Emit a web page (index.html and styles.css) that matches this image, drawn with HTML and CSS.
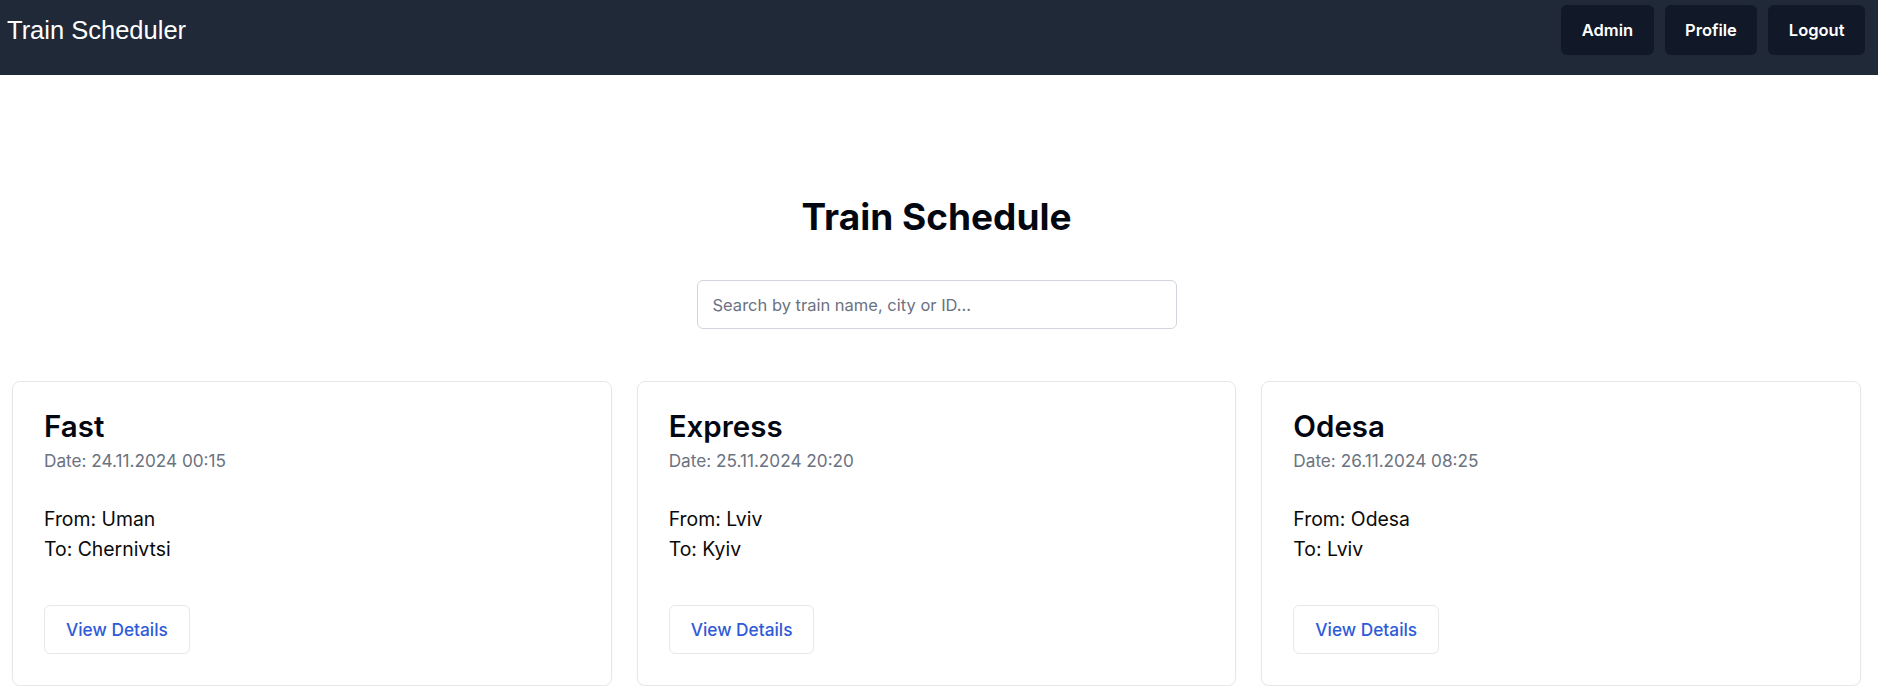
FILE: index.html
```html
<!DOCTYPE html>
<html lang="en">
<head>
<meta charset="utf-8">
<title>Train Scheduler</title>
<link rel="stylesheet" href="styles.css">
</head>
<body>
<header class="topbar">
  <div class="brand">Train Scheduler</div>
  <nav class="nav">
    <button class="nav-btn">Admin</button>
    <button class="nav-btn">Profile</button>
    <button class="nav-btn">Logout</button>
  </nav>
</header>
<main class="main">
  <h1 class="page-title">Train Schedule</h1>
  <div class="search-wrap">
    <input class="search" type="text" placeholder="Search by train name, city or ID...">
  </div>
  <section class="cards">
    <article class="card">
      <h2 class="card-title">Fast</h2>
      <p class="card-date">Date: 24.11.2024 00:15</p>
      <div class="card-route">
        <p>From: Uman</p>
        <p>To: Chernivtsi</p>
      </div>
      <button class="details-btn">View Details</button>
    </article>
    <article class="card">
      <h2 class="card-title">Express</h2>
      <p class="card-date">Date: 25.11.2024 20:20</p>
      <div class="card-route">
        <p>From: Lviv</p>
        <p>To: Kyiv</p>
      </div>
      <button class="details-btn">View Details</button>
    </article>
    <article class="card">
      <h2 class="card-title">Odesa</h2>
      <p class="card-date">Date: 26.11.2024 08:25</p>
      <div class="card-route">
        <p>From: Odesa</p>
        <p>To: Lviv</p>
      </div>
      <button class="details-btn">View Details</button>
    </article>
  </section>
</main>
</body>
</html>
```

FILE: styles.css
```css
* { box-sizing: border-box; }
html, body { margin: 0; padding: 0; }
body {
  font-family: Inter, "Noto Sans", "Liberation Sans", sans-serif;
  color: #030712;
  background: #ffffff;
}
.topbar {
  height: 75px;
  background: #1f2937;
  display: flex;
  justify-content: space-between;
  align-items: flex-start;
  padding: 5px 13px 0 7px;
}
.brand {
  font-family: "Liberation Sans", Arial, sans-serif;
  font-size: 25.5px;
  line-height: 50px;
  color: #ffffff;
}
.nav { display: flex; gap: 11px; }
.nav-btn {
  font-family: Inter, "Noto Sans", sans-serif;
  font-size: 16.5px;
  font-weight: 600;
  color: #ffffff;
  background: #111827;
  border: none;
  border-radius: 6px;
  height: 50px;
  padding: 0 20.5px;
}
.main { padding: 119px 17px 0 12px; }
.page-title {
  margin: 0;
  text-align: center;
  font-size: 37px;
  line-height: 46px;
  font-weight: 700;
  color: #030712;
}
.search-wrap {
  display: flex;
  justify-content: center;
  margin-top: 40px;
}
.search {
  width: 480px;
  height: 49px;
  border: 1px solid #d1d5db;
  border-radius: 6px;
  padding: 0 15px;
  font-family: Inter, "Noto Sans", sans-serif;
  font-size: 16.5px;
  color: #111827;
}
.search::placeholder { color: #6b7280; }
.cards {
  display: grid;
  grid-template-columns: repeat(3, 1fr);
  gap: 25px;
  margin-top: 52px;
}
.card {
  border: 1px solid #e5e7eb;
  border-radius: 8px;
  padding: 26px 31px 31px;
  box-shadow: 0 1px 2px rgba(0,0,0,0.04);
}
.card-title {
  margin: 0;
  font-size: 29.5px;
  line-height: 36px;
  font-weight: 600;
  color: #030712;
}
.card-date {
  margin: 5px 0 0;
  font-size: 17.2px;
  line-height: 24px;
  color: #6b7280;
}
.card-route {
  margin-top: 31px;
  font-size: 19.4px;
  line-height: 30px;
  color: #0a0a0a;
}
.card-route p { margin: 0; }
.details-btn {
  margin-top: 41px;
  height: 49px;
  padding: 0 21px;
  background: #ffffff;
  border: 1px solid #e5e7eb;
  border-radius: 6px;
  font-family: Inter, "Noto Sans", sans-serif;
  font-size: 17.3px;
  font-weight: 500;
  color: #2f5bd8;
}
```
